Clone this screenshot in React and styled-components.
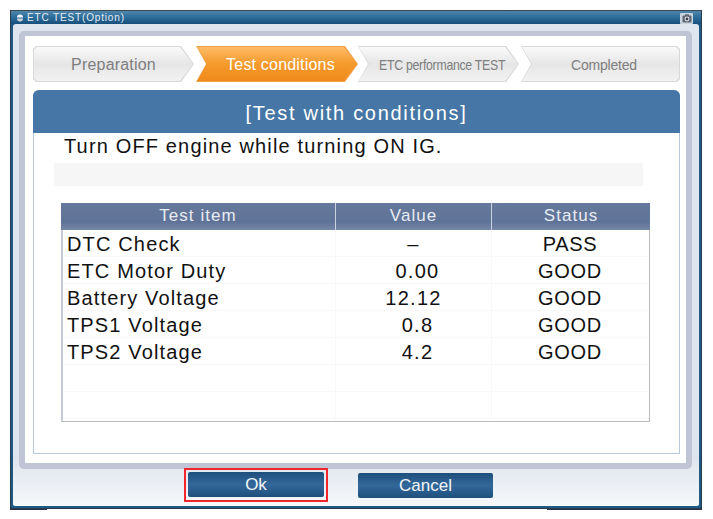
import React from 'react';
import styled, { createGlobalStyle } from 'styled-components';

const STEPS = [
  { label: 'Preparation', width: 161, first: true },
  { label: 'Test conditions', width: 162, active: true },
  { label: 'ETC performance TEST', width: 161, narrow: true },
  { label: 'Completed', width: 159, last: true, small: true },
];

const ROWS = [
  { item: 'DTC Check', value: '–', status: 'PASS' },
  { item: 'ETC Motor Duty', value: '0.00', status: 'GOOD', nudge: true },
  { item: 'Battery Voltage', value: '12.12', status: 'GOOD' },
  { item: 'TPS1 Voltage', value: '0.8', status: 'GOOD', nudge: true },
  { item: 'TPS2 Voltage', value: '4.2', status: 'GOOD', nudge: true },
  { item: '', value: '', status: '' },
  { item: '', value: '', status: '' },
];

const App = () => {
  return (
    <>
      <GlobalStyle />
      <Window>
        <TitleBar>
          <TitleIcon viewBox="0 0 8 8">
            <path d="M1 3.4a3 3 0 0 1 6 0z" fill="#f4f6f8" />
            <path d="M1 4.6a3 3 0 0 0 6 0z" fill="#c9d2da" />
          </TitleIcon>
          <TitleText>ETC TEST(Option)</TitleText>
          <CameraButton>
            <svg width="10" height="9" viewBox="0 0 10 9">
              <rect x="0.5" y="1.5" width="9" height="7" rx="1" fill="#5d6672" />
              <rect x="3" y="0.3" width="4" height="2" fill="#5d6672" />
              <circle cx="5" cy="5" r="2.4" fill="#e8ebef" />
              <circle cx="5" cy="5" r="1.4" fill="#39424e" />
            </svg>
          </CameraButton>
        </TitleBar>
        <Body>
          <Frame>
            <Stepper>
              {STEPS.map((step) => (
                <Step
                  key={step.label}
                  $width={step.width}
                  $first={step.first}
                  $last={step.last}
                  $active={step.active}
                  $narrow={step.narrow}
                  $small={step.small}
                >
                  <StepLabel $narrow={step.narrow}>{step.label}</StepLabel>
                </Step>
              ))}
            </Stepper>
            <Content>
              <Heading>[Test with conditions]</Heading>
              <Message>Turn OFF engine while turning ON IG.</Message>
              <GreyBar />
              <Table>
                <HeadRow>
                  <HeadCell>Test item</HeadCell>
                  <HeadCell>Value</HeadCell>
                  <HeadCell>Status</HeadCell>
                </HeadRow>
                {ROWS.map((row, i) => (
                  <Row key={i}>
                    <ItemCell>{row.item}</ItemCell>
                    <ValueCell $nudge={row.nudge}>{row.value}</ValueCell>
                    <StatusCell>{row.status}</StatusCell>
                  </Row>
                ))}
              </Table>
            </Content>
          </Frame>
          <Actions>
            <Highlight>
              <ActionButton>Ok</ActionButton>
            </Highlight>
            <ActionButton>Cancel</ActionButton>
          </Actions>
        </Body>
      </Window>
      <BottomMarks>
        <Mark $width={37} />
        <Mark $width={155} />
      </BottomMarks>
    </>
  );
};

export default App;

const GlobalStyle = createGlobalStyle`
  html, body {
    margin: 0;
    background: #fff;
  }
  body {
    padding: 10px 0 0 10px;
    font-family: "Liberation Sans", Arial, sans-serif;
    overflow: hidden;
  }
`;

const Window = styled.div`
  box-sizing: border-box;
  width: 692px;
  height: 499px;
  display: flex;
  flex-direction: column;
  background: #1d5a86;
  border: 1px solid #2c3c48;
  border-top-color: #3a4650;
  padding: 0 2px 2px;
`;

const TitleBar = styled.div`
  height: 13px;
  flex: none;
  display: flex;
  align-items: center;
  margin: 0 -2px;
  padding: 0 8px 0 5px;
  background: linear-gradient(#4f86ad, #2f6f9c 45%, #164f7b);
`;

const TitleIcon = styled.svg`
  width: 8px;
  height: 8px;
  margin-right: 3px;
`;

const TitleText = styled.div`
  flex: 1;
  font-size: 10px;
  letter-spacing: 0.85px;
  color: #e6edf3;
`;

const CameraButton = styled.div`
  width: 13px;
  height: 11px;
  margin-top: 1px;
  display: flex;
  align-items: center;
  justify-content: center;
  background: #c9d4de;
  border-radius: 1px;
`;

const Body = styled.div`
  flex: 1;
  display: flex;
  flex-direction: column;
  padding: 7px 7px 0 6px;
  background: linear-gradient(#dfe5ee 90%, #f6f8fa);
  border-radius: 3px 3px 2px 2px;
`;

const Frame = styled.div`
  box-sizing: border-box;
  height: 438px;
  flex: none;
  background: #fff;
  border: 6px solid #c0c5d6;
  border-top-width: 5px;
  border-radius: 5px;
  padding: 10px 6px 9px 8px;
  display: flex;
  flex-direction: column;
`;

const Stepper = styled.div`
  display: flex;
  height: 36px;
  flex: none;
  gap: 2px;
  margin-bottom: 8px;
`;

const arrow = ({ $first }) =>
  $first
    ? 'polygon(3px 0, calc(100% - 13px) 0, 100% 50%, calc(100% - 13px) 100%, 3px 100%, 0 calc(100% - 3px), 0 3px)'
    : 'polygon(0 0, calc(100% - 13px) 0, 100% 50%, calc(100% - 13px) 100%, 0 100%, 10px 50%)';

const lastShape =
  'polygon(0 0, calc(100% - 3px) 0, 100% 3px, 100% calc(100% - 3px), calc(100% - 3px) 100%, 0 100%, 10px 50%)';

const Step = styled.div`
  position: relative;
  z-index: 0;
  box-sizing: border-box;
  flex: none;
  width: ${({ $width }) => $width}px;
  margin-left: ${({ $narrow }) => ($narrow ? '-2px' : '0')};
  display: flex;
  align-items: center;
  justify-content: center;
  padding: 2px 0 0 ${({ $first }) => ($first ? '0' : '7px')};
  color: ${({ $active }) => ($active ? '#fff' : '#7e7e7e')};
  font-size: ${({ $narrow, $small }) => ($narrow ? '14.5px' : $small ? '14px' : '16px')};
  letter-spacing: ${({ $narrow, $small }) => ($narrow ? '-0.35px' : $small ? '-0.2px' : '0.2px')};
  background: ${({ $active }) => ($active ? '#f0a24a' : '#d8d8d8')};
  clip-path: ${(p) => (p.$last ? lastShape : arrow(p))};

  &::before {
    content: '';
    position: absolute;
    z-index: -1;
    inset: 1px;
    background: ${({ $active }) =>
      $active
        ? 'linear-gradient(#fdbb66, #f59a2c 50%, #f08a1c)'
        : 'linear-gradient(#fafafa, #e6e6e6 50%, #f2f2f2)'};
    clip-path: ${(p) => (p.$last ? lastShape : arrow(p))};
  }
`;

const StepLabel = styled.span`
  white-space: nowrap;
  transform: ${({ $narrow }) => ($narrow ? 'scaleX(0.85)' : 'none')};
`;

const Content = styled.div`
  flex: 1;
  display: flex;
  flex-direction: column;
  border: 1px solid #b9c8da;
  border-top: 0;
  border-radius: 6px 6px 0 0;
`;

const Heading = styled.div`
  margin: 0 -1px;
  height: 43px;
  flex: none;
  padding-top: 3px;
  box-sizing: border-box;
  background: #4576a5;
  border-radius: 6px 6px 0 0;
  color: #fff;
  font-size: 20px;
  letter-spacing: 1.7px;
  display: flex;
  align-items: center;
  justify-content: center;
`;

const Message = styled.div`
  margin: 2px 0 0 30px;
  height: 28px;
  flex: none;
  line-height: 22px;
  font-size: 20px;
  letter-spacing: 1.15px;
  color: #111;
`;

const GreyBar = styled.div`
  flex: none;
  height: 23px;
  width: 589px;
  margin-left: 20px;
  background: #f6f6f6;
`;

const Table = styled.div`
  box-sizing: border-box;
  width: 589px;
  height: 219px;
  flex: none;
  margin: 17px 0 0 27px;
  border-left: 2px solid #c6cad4;
  border-right: 1px solid #bbb;
  border-bottom: 1px solid #bbb;
  display: flex;
  flex-direction: column;
`;

const columns = `
  display: grid;
  grid-template-columns: 272px 156px 1fr;
`;

const HeadRow = styled.div`
  ${columns}
  height: 27px;
  flex: none;
  margin: 0 -1px 0 -2px;
  grid-template-columns: 274px 156px 1fr;
  background: linear-gradient(#66799c, #5f7398 70%, #7687a7);
`;

const HeadCell = styled.div`
  display: flex;
  align-items: center;
  justify-content: center;
  padding-bottom: 2px;
  color: #e8ecf2;
  font-size: 17px;
  letter-spacing: 1.05px;
  & + & {
    border-left: 1px solid #c9d1de;
  }
`;

const Row = styled.div`
  ${columns}
  height: 27px;
  flex: none;
  box-sizing: border-box;
  color: #111;
  font-size: 20px;
  line-height: 29px;
  letter-spacing: 1.15px;
  border-bottom: 1px solid #f8f8f8;
`;

const ItemCell = styled.div`
  padding-left: 4px;
`;

const ValueCell = styled.div`
  text-align: center;
  letter-spacing: 1.3px;
  padding-left: ${({ $nudge }) => ($nudge ? '8px' : '0')};
  border-left: 1px solid #f8f8f8;
`;

const StatusCell = styled.div`
  text-align: center;
  letter-spacing: 0.7px;
  padding-right: 1px;
  border-left: 1px solid #f8f8f8;
`;

const Actions = styled.div`
  display: flex;
  align-items: center;
  gap: 30px;
  margin: -1px 0 0 165px;
`;

const Highlight = styled.div`
  box-sizing: border-box;
  width: 144px;
  height: 34px;
  padding: 0 2px 2px;
  display: flex;
  align-items: center;
  border: 2px solid #f0282c;
`;

const ActionButton = styled.div`
  box-sizing: border-box;
  width: 135px;
  height: 25px;
  flex: none;
  padding-top: 2px;
  display: flex;
  align-items: center;
  justify-content: center;
  border-radius: 2px;
  background: linear-gradient(#1f4f7c, #33689a 50%, #1f4f7c);
  color: #f2f5f8;
  font-size: 17px;
  ${Highlight} > & {
    width: 136px;
  }
`;

const BottomMarks = styled.div`
  display: flex;
  justify-content: space-between;
  width: 692px;
`;

const Mark = styled.div`
  width: ${({ $width }) => $width}px;
  height: 1px;
  background: #2c3050;
`;
